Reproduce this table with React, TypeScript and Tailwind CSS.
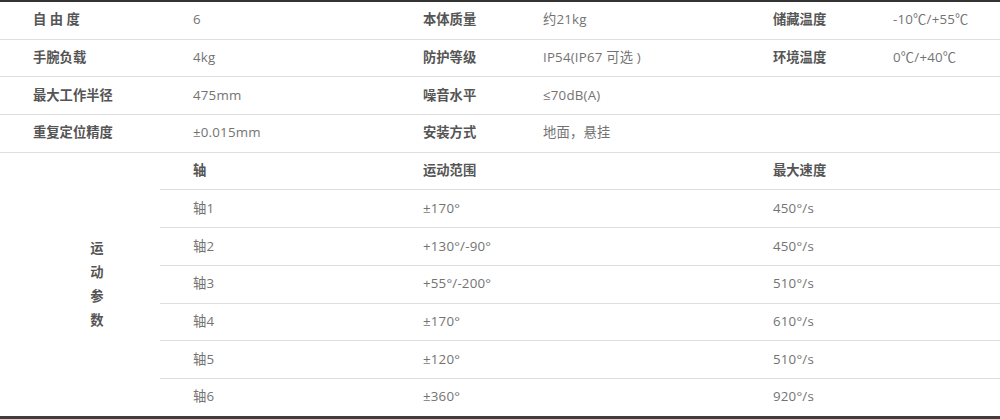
const specs: [string, string, string, string, string, string][] = [
  ["自 由 度", "6", "本体质量", "约21kg", "储藏温度", "-10℃/+55℃"],
  ["手腕负载", "4kg", "防护等级", "IP54(IP67 可选 )", "环境温度", "0℃/+40℃"],
  ["最大工作半径", "475mm", "噪音水平", "≤70dB(A)", "", ""],
  ["重复定位精度", "±0.015mm", "安装方式", "地面，悬挂", "", ""],
];

const axes: [string, string, string][] = [
  ["轴1", "±170°", "450°/s"],
  ["轴2", "+130°/-90°", "450°/s"],
  ["轴3", "+55°/-200°", "510°/s"],
  ["轴4", "±170°", "610°/s"],
  ["轴5", "±120°", "510°/s"],
  ["轴6", "±360°", "920°/s"],
];

const label = "font-bold text-[#555]";
const value = "text-[#737373] tracking-[0.2px]";

export default function App() {
  return (
    <div
      className="w-[1000px] h-[419px] bg-white text-[13.3px] overflow-hidden"
      style={{ fontFamily: '"Open Sans", "Noto Sans CJK SC", sans-serif' }}
    >
      <div className="border-t-2 border-[#333]">
        {specs.map((row, i) => (
          <div
            key={i}
            className="grid grid-cols-[160px_230px_120px_230px_120px_140px] h-[37.7px] border-b border-[#dedede]"
          >
            {row.map((cell, j) => (
              <div
                key={j}
                className={`flex items-center pl-[33px] whitespace-nowrap ${j % 2 === 0 ? label : value}`}
              >
                {cell}
              </div>
            ))}
          </div>
        ))}

        <div className="flex border-b-[3px] border-[#3d3d3d]">
          <div className={`w-[160px] pl-[34px] flex items-center justify-center ${label}`}>
            <div className="flex flex-col items-center leading-[24px]">
              <span>运</span>
              <span>动</span>
              <span>参</span>
              <span>数</span>
            </div>
          </div>
          <div className="flex-1">
            <div className="grid grid-cols-[230px_350px_260px] h-[37.7px] border-b border-[#dedede]">
              <div className={`flex items-center pl-[33px] ${label}`}>轴</div>
              <div className={`flex items-center pl-[33px] ${label}`}>运动范围</div>
              <div className={`flex items-center pl-[33px] ${label}`}>最大速度</div>
            </div>
            {axes.map((row, i) => (
              <div
                key={i}
                className={`grid grid-cols-[230px_350px_260px] ${
                  i < axes.length - 1 ? "h-[37.7px] border-b border-[#dedede]" : "h-[36.7px]"
                }`}
              >
                {row.map((cell, j) => (
                  <div key={j} className={`flex items-center pl-[33px] whitespace-nowrap ${value}`}>
                    {cell}
                  </div>
                ))}
              </div>
            ))}
          </div>
        </div>
      </div>
    </div>
  );
}
